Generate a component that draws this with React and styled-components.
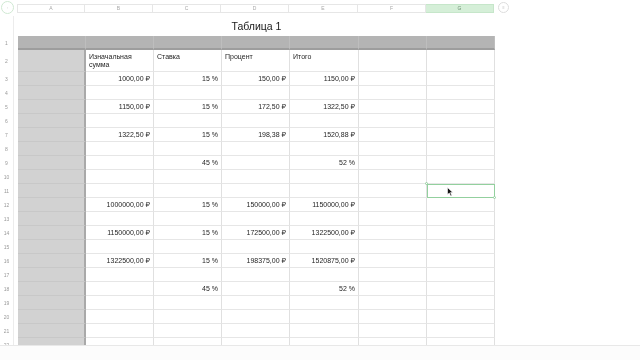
import React from "react";
import styled, { createGlobalStyle, css } from "styled-components";

const Global = createGlobalStyle`
  html, body { margin: 0; padding: 0; background: #ffffff; }
  body {
    font-family: "Liberation Sans", "DejaVu Sans", Arial, sans-serif;
    -webkit-font-smoothing: antialiased;
  }
`;

const COLS = [68, 68, 68, 68, 69, 68, 68];
const LETTERS = ["A", "B", "C", "D", "E", "F", "G"];
const template = COLS.map((w) => `${w}px`).join(" ");

const Screen = styled.div`
  position: relative;
  width: 640px;
  height: 360px;
  overflow: hidden;
  display: flex;
  flex-direction: column;
  background: #fff;
`;

const TopBar = styled.div`
  height: 16px;
  display: flex;
  align-items: flex-start;
  flex-shrink: 0;
  will-change: opacity;
`;

const Circle = styled.div`
  box-sizing: border-box;
  width: ${(p) => p.$size}px;
  height: ${(p) => p.$size}px;
  margin: ${(p) => p.$margin};
  border-radius: 50%;
  border: 1px solid ${(p) => (p.$green ? "#cfe8d2" : "#dcdcdc")};
  display: flex;
  align-items: center;
  justify-content: center;
  font-size: 4px;
  color: #aaa;
  flex-shrink: 0;
`;

const HeaderStrip = styled.div`
  margin-top: 4px;
  margin-left: 3px;
  display: grid;
  grid-template-columns: ${template};
  height: 9px;
`;

const ColHead = styled.div`
  box-sizing: border-box;
  border: 1px solid ${(p) => (p.$active ? "#c6e6ca" : "#e6e6e6")};
  border-left-width: ${(p) => (p.$first ? 1 : 0)}px;
  background: ${(p) => (p.$active ? "#d5efd8" : "#fff")};
  font-size: 5px;
  line-height: 7px;
  color: ${(p) => (p.$active ? "#6d8f72" : "#a8a8a8")};
  text-align: center;
`;

const Body = styled.div`
  flex: 1;
  display: flex;
  overflow: hidden;
`;

const RowNumbers = styled.div`
  width: 14px;
  box-sizing: border-box;
  border-right: 1px solid #ececec;
  display: flex;
  flex-direction: column;
  flex-shrink: 0;
  will-change: opacity;
`;

const RowNum = styled.div`
  height: ${(p) => p.$h}px;
  flex-shrink: 0;
  display: flex;
  align-items: center;
  justify-content: center;
  font-size: 5px;
  color: #9a9a9a;
`;

const Sheet = styled.div`
  margin-left: 4px;
  display: flex;
  flex-direction: column;
  width: 477px;
  will-change: opacity;
`;

const Title = styled.div`
  height: 20px;
  display: flex;
  align-items: center;
  justify-content: center;
  font-size: 10.5px;
  color: #1a1a1a;
  flex-shrink: 0;
`;

const Row = styled.div`
  display: grid;
  grid-template-columns: ${template};
  height: ${(p) => p.$h}px;
  flex-shrink: 0;
`;

const Cell = styled.div`
  position: relative;
  box-sizing: border-box;
  border-right: 1px solid #e0e0e0;
  border-bottom: 1px solid #e6e6e6;
  font-size: 7px;
  color: #1f1f1f;
  display: flex;
  padding: 0 3px;
  white-space: nowrap;
  align-items: center;
  justify-content: ${(p) => (p.$align === "right" ? "flex-end" : "flex-start")};
  ${(p) =>
    p.$label &&
    css`
      align-items: flex-start;
      padding-top: 3px;
      white-space: normal;
      line-height: 8px;
    `}
  ${(p) =>
    p.$stub &&
    css`
      background: #d2d2d2;
      border-right: 2px solid #a9a9a9;
      border-bottom-color: #c8c8c8;
    `}
  ${(p) =>
    p.$band &&
    css`
      background: #b4b4b4;
      border-right-color: #bebebe;
      border-bottom: 2px solid #9d9d9d;
    `}
  ${(p) =>
    p.$selected &&
    css`
      outline: 1px solid #93d09e;
      outline-offset: -1px;
      z-index: 2;
    `}
`;

const Handle = styled.span`
  position: absolute;
  width: 3px;
  height: 3px;
  border-radius: 50%;
  background: #fff;
  border: 1px solid #93d09e;
  box-sizing: border-box;
  ${(p) => (p.$pos === "tl" ? "left: -2px; top: -2px;" : "right: -2px; bottom: -2px;")}
`;

const Footer = styled.div`
  height: 14px;
  flex-shrink: 0;
  border-top: 1px solid #e8e8e8;
  background: #fcfcfc;
`;

const Cursor = styled.svg`
  position: absolute;
  left: 447px;
  top: 187px;
`;

const data = {
  3: ["1000,00 ₽", "15 %", "150,00 ₽", "1150,00 ₽"],
  5: ["1150,00 ₽", "15 %", "172,50 ₽", "1322,50 ₽"],
  7: ["1322,50 ₽", "15 %", "198,38 ₽", "1520,88 ₽"],
  9: ["", "45 %", "", "52 %"],
  12: ["1000000,00 ₽", "15 %", "150000,00 ₽", "1150000,00 ₽"],
  14: ["1150000,00 ₽", "15 %", "172500,00 ₽", "1322500,00 ₽"],
  16: ["1322500,00 ₽", "15 %", "198375,00 ₽", "1520875,00 ₽"],
  18: ["", "45 %", "", "52 %"],
};

const rowHeight = (r) => (r === 2 ? 22 : 14);
const rows = Array.from({ length: 22 }, (_, i) => i + 1);

export default function App() {
  return (
    <>
      <Global />
      <Screen>
        <TopBar>
          <Circle $size={13} $margin="1px 0 0 1px" $green>
            ◦
          </Circle>
          <HeaderStrip>
            {LETTERS.map((l, i) => (
              <ColHead key={l} $first={i === 0} $active={l === "G"}>
                {l}
              </ColHead>
            ))}
          </HeaderStrip>
          <Circle $size={11} $margin="2px 0 0 4px">
            ≡
          </Circle>
        </TopBar>
        <Body>
          <RowNumbers>
            <RowNum $h={20} />
            {rows.map((r) => (
              <RowNum key={r} $h={rowHeight(r)}>
                {r}
              </RowNum>
            ))}
          </RowNumbers>
          <Sheet>
            <Title>Таблица 1</Title>
            {rows.map((r) => {
              if (r === 1) {
                return (
                  <Row key={r} $h={14}>
                    {LETTERS.map((l) => (
                      <Cell key={l} $band />
                    ))}
                  </Row>
                );
              }
              if (r === 2) {
                const heads = ["Изначальная сумма", "Ставка", "Процент", "Итого", "", ""];
                return (
                  <Row key={r} $h={22}>
                    <Cell $stub />
                    {heads.map((h, i) => (
                      <Cell key={i} $label>
                        {h}
                      </Cell>
                    ))}
                  </Row>
                );
              }
              const vals = data[r] || ["", "", "", ""];
              return (
                <Row key={r} $h={14}>
                  <Cell $stub />
                  {vals.map((v, i) => (
                    <Cell key={i} $align="right">
                      {v}
                    </Cell>
                  ))}
                  <Cell />
                  <Cell $selected={r === 11}>
                    {r === 11 && (
                      <>
                        <Handle $pos="tl" />
                        <Handle $pos="br" />
                      </>
                    )}
                  </Cell>
                </Row>
              );
            })}
          </Sheet>
        </Body>
        <Footer />
        <Cursor width="7" height="10" viewBox="0 0 7 10">
          <path
            d="M0.5 0.5 L0.5 7.5 L2.3 6 L3.6 9 L4.8 8.5 L3.5 5.6 L5.8 5.6 Z"
            fill="#111"
            stroke="#fff"
            strokeWidth="0.6"
          />
        </Cursor>
      </Screen>
    </>
  );
}
